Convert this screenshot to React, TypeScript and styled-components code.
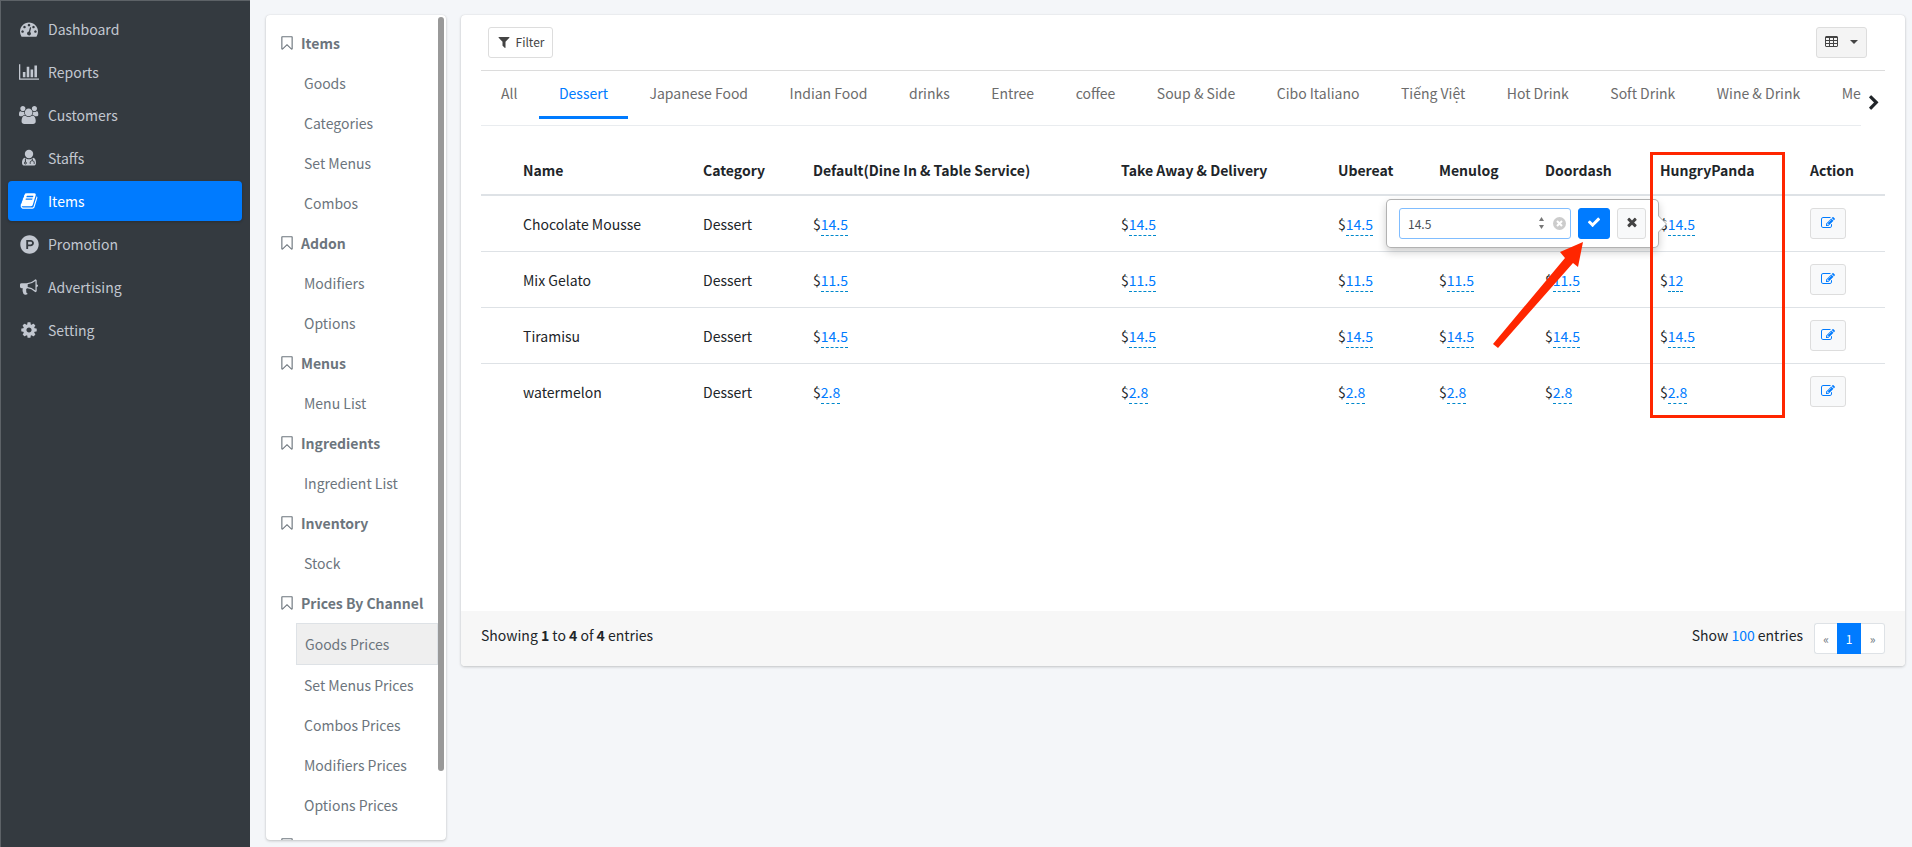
import React from 'react';
import styled, { createGlobalStyle, css } from 'styled-components';
import { FaProductHunt } from 'react-icons/fa';

const GlobalStyle = createGlobalStyle`
  *, *::before, *::after { box-sizing: border-box; }
  body {
    margin: 0;
    background: #f4f6f9;
    color: #212529;
    font-family: 'Source Sans Pro', 'Noto Sans CJK SC', 'Noto Sans', sans-serif;
    font-size: 14px;
    line-height: 24px;
  }
  a { color: #007bff; text-decoration: none; }
  button, input { font-family: inherit; }
  ul { list-style: none; margin: 0; padding: 0; }
`;

/* ---------- icons ---------- */

const paths = {
  dashboard: {
    w: 1792,
    d: 'M384 1152q0-53-37.5-90.5t-90.5-37.5-90.5 37.5-37.5 90.5 37.5 90.5 90.5 37.5 90.5-37.5 37.5-90.5zm192-448q0-53-37.5-90.5t-90.5-37.5-90.5 37.5-37.5 90.5 37.5 90.5 90.5 37.5 90.5-37.5 37.5-90.5zm428 481l101-382q6-26-7.5-48.5t-38.5-29.5-48 6.5-30 39.5l-101 382q-60 5-107 43.5t-63 98.5q-20 77 20 146t117 89 146-20 89-117q16-60-6-117t-72-91zm660-33q0-53-37.5-90.5t-90.5-37.5-90.5 37.5-37.5 90.5 37.5 90.5 90.5 37.5 90.5-37.5 37.5-90.5zm-640-640q0-53-37.5-90.5t-90.5-37.5-90.5 37.5-37.5 90.5 37.5 90.5 90.5 37.5 90.5-37.5 37.5-90.5zm448 192q0-53-37.5-90.5t-90.5-37.5-90.5 37.5-37.5 90.5 37.5 90.5 90.5 37.5 90.5-37.5 37.5-90.5zm320 448q0 261-141 483-19 29-54 29h-1402q-35 0-54-29-141-221-141-483 0-182 71-348t191-286 286-191 348-71 348 71 286 191 191 286 71 348z',
  },
  chart: {
    w: 2048,
    d: 'M640 896v512h-256v-512h256zm384-512v1024h-256v-1024h256zm1024 1152v128h-2048v-1536h128v1408h1920zm-640-896v768h-256v-768h256zm384-384v1152h-256v-1152h256z',
  },
  users: {
    w: 1920,
    d: 'M593 896q-162 5-265 128h-134q-82 0-138-40.5t-56-118.5q0-353 124-353 6 0 43.5 21t97.5 42.5 119 21.5q67 0 133-23-5 37-5 66 0 139 81 256zm1071 637q0 120-73 189.5t-194 69.5h-874q-121 0-194-69.5t-73-189.5q0-53 3.5-103.5t14-109 26.5-108.5 43-97.5 62-81 85.5-53.5 111.5-20q10 0 43 21.5t73 48 107 48 135 21.5 135-21.5 107-48 73-48 43-21.5q61 0 111.5 20t85.5 53.5 62 81 43 97.5 26.5 108.5 14 109 3.5 103.5zm-1024-1277q0 106-75 181t-181 75-181-75-75-181 75-181 181-75 181 75 75 181zm704 384q0 159-112.5 271.5t-271.5 112.5-271.5-112.5-112.5-271.5 112.5-271.5 271.5-112.5 271.5 112.5 112.5 271.5zm576 225q0 78-56 118.5t-138 40.5h-134q-103-123-265-128 81-117 81-256 0-29-5-66 66 23 133 23 59 0 119-21.5t97.5-42.5 43.5-21q124 0 124 353zm-128-609q0 106-75 181t-181 75-181-75-75-181 75-181 181-75 181 75 75 181z',
  },
  book: {
    w: 1792,
    d: 'M1703 478q40 57 18 129l-275 906q-19 64-76.5 107.5t-122.5 43.5h-923q-77 0-148.5-53.5t-99.5-131.5q-24-67-2-127 0-4 3-27t4-37q1-8-3-21.5t-3-19.5q2-11 8-21t16.5-23.5 16.5-23.5q23-38 45-91.5t30-91.5q3-10 .5-30t-.5-28q3-11 17-28t17-23q21-36 42-92t25-90q1-9-2.5-32t.5-28q4-13 22-30.5t22-22.5q19-26 42.5-84.5t27.5-96.5q1-8-3-25.5t-2-26.5q2-8 9-18t18-23 17-21q8-12 16.5-30.5t15-35 16-36 19.5-32 26.5-23.5 36-11.5 47.5 5.5l-1 3q38-9 51-9h761q74 0 114 56t18 130l-274 906q-36 119-71.5 153.5t-128.5 34.5h-869q-27 0-38 15-11 16-1 43 24 70 144 70h923q29 0 56-15.5t35-41.5l300-987q7-22 5-57 38 15 59 43zm-1064 2q-4 13 2 22.5t20 9.5h608q13 0 25.5-9.5t16.5-22.5l21-64q4-13-2-22.5t-20-9.5h-608q-13 0-25.5 9.5t-16.5 22.5zm-83 256q-4 13 2 22.5t20 9.5h608q13 0 25.5-9.5t16.5-22.5l21-64q4-13-2-22.5t-20-9.5h-608q-13 0-25.5 9.5t-16.5 22.5z',
  },
  bullhorn: {
    w: 1792,
    d: 'M1664 640q53 0 90.5 37.5t37.5 90.5-37.5 90.5-90.5 37.5v384q0 52-38 90t-90 38q-417-347-812-380-58 19-91 66t-31 100.5 40 92.5q-20 33-23 65.5t6 58 33.5 55 48 50 61.5 50.5q-29 58-111.5 83t-168.5 11.5-132-55.5q-7-23-29.5-87.5t-32-94.5-23-89-15-101 3.5-98.5 22-110.5h-122q-66 0-113-47t-47-113v-192q0-66 47-113t113-47h480q435 0 896-384 52 0 90 38t38 90v384zm-128 604v-954q-394 302-768 343v270q377 42 768 341z',
  },
  cog: {
    w: 1792,
    d: 'M1152 896q0-106-75-181t-181-75-181 75-75 181 75 181 181 75 181-75 75-181zm512-109v222q0 12-8 23t-20 13l-185 28q-19 54-39 91 35 50 107 138 10 12 10 25t-9 23q-27 37-99 108t-94 71q-12 0-26-9l-138-108q-44 23-91 38-16 136-29 186-7 28-36 28h-222q-14 0-24.5-8.5t-11.5-21.5l-28-184q-49-16-90-37l-141 107q-10 9-25 9-14 0-25-11-126-114-165-168-7-10-7-23 0-12 8-23 15-21 51-66.5t54-70.5q-27-50-41-99l-183-27q-13-2-21-12.5t-8-23.5v-222q0-12 8-23t19-13l186-28q14-46 39-92-40-57-107-138-10-12-10-24 0-10 9-23 26-36 98.5-107.5t94.5-71.5q13 0 26 10l138 107q44-23 91-38 16-136 29-186 7-28 36-28h222q14 0 24.5 8.5t11.5 21.5l28 184q49 16 90 37l142-107q9-9 24-9 13 0 25 10 129 119 165 170 7 8 7 22 0 12-8 23-15 21-51 66.5t-54 70.5q26 50 41 98l183 28q13 2 21 12.5t8 23.5z',
  },
  bookmark: {
    w: 1792,
    d: 'M1408 256h-1024v1242l423-406 89-85 89 85 423 406v-1242zm12-128q23 0 44 9 33 13 52.5 41t19.5 62v1289q0 34-19.5 62t-52.5 41q-19 8-44 8-48 0-83-32l-441-424-441 424q-36 33-83 33-23 0-44-9-33-13-52.5-41t-19.5-62v-1289q0-34 19.5-62t52.5-41q21-9 44-9h1048z',
  },
  filter: {
    w: 1792,
    d: 'M1595 295q17 41-14 70l-493 493v742q0 42-39 59-13 5-25 5-27 0-45-19l-256-256q-19-19-19-45v-486l-493-493q-31-29-14-70 17-39 59-39h1280q42 0 59 39z',
  },
  check: {
    w: 1792,
    d: 'M1671 566q0 40-28 68l-724 724-136 136q-28 28-68 28t-68-28l-136-136-362-362q-28-28-28-68t28-68l136-136q28-28 68-28t68 28l294 295 656-657q28-28 68-28t68 28l136 136q28 28 28 68z',
  },
  times: {
    w: 1792,
    d: 'M1490 1322q0 40-28 68l-136 136q-28 28-68 28t-68-28l-294-294-294 294q-28 28-68 28t-68-28l-136-136q-28-28-28-68t28-68l294-294-294-294q-28-28-28-68t28-68l136-136q28-28 68-28t68 28l294 294 294-294q28-28 68-28t68 28l136 136q28 28 28 68t-28 68l-294 294 294 294q28 28 28 68z',
  },
  edit: {
    w: 1792,
    d: 'M888 1184l116-116-152-152-116 116v56h96v96h56zm440-720q-16-16-33 1l-350 350q-17 17-1 33t33-1l350-350q17-17 1-33zm80 594v190q0 119-84.5 203.5t-203.5 84.5h-832q-119 0-203.5-84.5t-84.5-203.5v-832q0-119 84.5-203.5t203.5-84.5h832q63 0 117 25 15 7 18 23 3 17-9 29l-49 49q-14 14-32 8-23-6-45-6h-832q-66 0-113 47t-47 113v832q0 66 47 113t113 47h832q66 0 113-47t47-113v-126q0-13 9-22l64-64q15-15 35-7t20 29zm-96-738l288 288-672 672h-288v-288zm444 132l-92 92-288-288 92-92q28-28 68-28t68 28l152 152q28 28 28 68t-28 68z',
  },
  chevron: {
    w: 1792,
    d: 'M1363 877l-742 742q-19 19-45 19t-45-19l-166-166q-19-19-19-45t19-45l531-531-531-531q-19-19-19-45t19-45l166-166q19-19 45-19t45 19l742 742q19 19 19 45t-19 45z',
  },
};

type IconName = keyof typeof paths;

const Svg = styled.svg`
  display: block;
  flex: none;
  fill: currentColor;
`;

function Icon({ name, size }: { name: IconName; size: number }) {
  const { w, d } = paths[name];
  return (
    <Svg viewBox={`0 0 ${w} 1792`} width={(size * w) / 1792} height={size} aria-hidden="true">
      <path d={d} />
    </Svg>
  );
}

function DoctorIcon() {
  return (
    <Svg viewBox="0 0 16 18" width={16} height={18} aria-hidden="true">
      <circle cx="8" cy="5" r="4.2" />
      <path d="M3.6 8.8C1.6 9.6 1 11.600 1 14c0 1.700 1 2.600 2.600 2.600h8.800c1.600 0 2.600-.9 2.600-2.600 0-2.400-.6-4.400-2.600-5.200C11.300 9.700 9.800 10.300 8 10.300S4.700 9.700 3.600 8.800z" />
      <g fill="none" stroke="#343a40" strokeWidth="1">
        <path d="M4.400 9.600v3.600M9.200 14.800v-1.300c0-2.400 4-2.400 4 0v1.300M11.300 9.600v2" />
        <circle cx="4.400" cy="14" r="1" />
      </g>
    </Svg>
  );
}

function GridIcon() {
  return (
    <Svg viewBox="0 0 13 11" width={13} height={11} aria-hidden="true">
      <path
        fillRule="evenodd"
        d="M1 0h11l1 1v9l-1 1H1l-1-1V1zM1 2v2h3V2zM5 2v2h3V2zM9 2v2h3V2zM1 5v2h3V5zM5 5v2h3V5zM9 5v2h3V5zM1 8v2h3V8zM5 8v2h3V8zM9 8v2h3V8z"
      />
    </Svg>
  );
}

/* ---------- shell ---------- */

const Page = styled.div`
  display: flex;
  height: 100vh;
  min-height: 700px;
`;

const Sidebar = styled.nav`
  flex: none;
  width: 250px;
  padding: 8px 8px 0 7px;
  background: #343a40;
  border-top: 1px solid #5d6267;
  border-left: 1px solid #5d6267;
`;

const SideList = styled.ul`
  display: grid;
  gap: 3px;
`;

const SideLink = styled.a<{ $active?: boolean }>`
  display: flex;
  align-items: center;
  gap: 6px;
  height: 40px;
  padding: 0 8px;
  border-radius: 4px;
  color: #c2c7d0;
  ${p => p.$active && css`
    background: #007bff;
    color: #fff;
    box-shadow: 0 1px 3px rgba(0, 0, 0, 0.24);
  `}
`;

const SideIcon = styled.span`
  display: flex;
  justify-content: center;
  width: 26px;
`;

const Content = styled.main`
  display: flex;
  flex: 1;
  min-width: 0;
  align-items: flex-start;
  gap: 15px;
  padding: 15px 7px 7px 16px;
`;

const panel = css`
  background: #fff;
  border-radius: 4px;
  box-shadow: 0 0 1px rgba(0, 0, 0, 0.125), 0 1px 3px rgba(0, 0, 0, 0.2);
`;

/* ---------- section menu ---------- */

const Menu = styled.nav`
  ${panel}
  position: relative;
  flex: none;
  width: 180px;
  height: 100%;
  padding: 8px 8px 0 13px;
  overflow: hidden;
`;

const Thumb = styled.div`
  position: absolute;
  top: 2px;
  right: 2px;
  width: 6px;
  height: 754px;
  border-radius: 3px;
  background: #999;
`;

const MenuGroup = styled.div`
  display: flex;
  align-items: center;
  gap: 6px;
  height: 40px;
  color: #6c757d;
  font-weight: 700;
  white-space: nowrap;
`;

const MenuItem = styled.a<{ $active?: boolean }>`
  display: block;
  margin-left: 17px;
  padding: 8px;
  color: #6c757d;
  white-space: nowrap;
  ${p => p.$active && css`
    border: 1px solid #dee2e6;
    background: #efefef;
  `}
`;

/* ---------- card ---------- */

const Card = styled.section`
  ${panel}
  flex: 1;
  min-width: 0;
`;

const CardBody = styled.div`
  min-height: 596px;
  padding: 12px 20px 0;
`;

const Toolbar = styled.div`
  display: flex;
  justify-content: space-between;
  padding: 0 18px 12px 7px;
  border-bottom: 1px solid #dcdcdc;
`;

const Button = styled.button<{ $tone?: 'plain' | 'grey' | 'light' | 'primary'; $width?: number }>`
  display: inline-flex;
  align-items: center;
  justify-content: center;
  gap: 5px;
  flex: none;
  width: ${p => (p.$width ? `${p.$width}px` : 'auto')};
  height: 31px;
  padding: 0 8px 2px;
  border: 1px solid #ddd;
  border-radius: 3px;
  background: #fff;
  color: #444;
  font-size: 12px;
  line-height: 20px;
  ${p => p.$tone === 'grey' && css`background: #f4f4f4; gap: 12px;`}
  ${p => p.$tone === 'light' && css`background: #f8f9fa;`}
  ${p => p.$tone === 'primary' && css`background: #007bff; border-color: #007bff; color: #fff;`}
`;

const EditButton = styled(Button)`
  display: flex;
  color: #007bff;
`;

const Caret = styled.span`
  border: 4px solid transparent;
  border-top-color: #444;
  border-bottom: 0;
`;

const TabBar = styled.div`
  display: flex;
  align-items: center;
`;

const Tabs = styled.div`
  display: flex;
  justify-content: space-between;
  flex: 1;
  min-width: 0;
  height: 55px;
  overflow: hidden;
  border-bottom: 1px solid #e9ecef;
`;

const Tab = styled.a<{ $active?: boolean }>`
  flex: none;
  height: 48px;
  padding: 10px 20px 0;
  border-bottom: 3px solid ${p => (p.$active ? '#007bff' : 'transparent')};
  color: ${p => (p.$active ? '#007bff' : '#6c6c6c')};
  white-space: nowrap;

  &:last-child {
    padding-right: 0;
  }
`;

const NextButton = styled.button`
  display: flex;
  justify-content: center;
  width: 24px;
  padding: 8px 2px 0 4px;
  border: 0;
  background: none;
  color: #212529;
`;

const Table = styled.table`
  width: 100%;
  margin-top: 20px;
  table-layout: fixed;
  border-collapse: separate;
  border-spacing: 0;
  text-align: left;
`;

const Th = styled.th`
  position: relative;
  padding: 12px;
  border-bottom: 2px solid #dee2e6;
  font-weight: 700;
  white-space: nowrap;
`;

const Td = styled.td`
  padding: 12px;
  vertical-align: middle;
  white-space: nowrap;

  tr + tr > & {
    border-top: 1px solid #dee2e6;
  }
`;

const Price = styled.span`
  position: relative;
`;

const PriceLink = styled.a`
  padding-bottom: 1px;
  border-bottom: 1px dashed #0088cc;
`;

/* ---------- inline price editor ---------- */

const Popover = styled.form`
  position: absolute;
  top: -15px;
  right: calc(100% + 1px);
  z-index: 2;
  display: flex;
  gap: 7px;
  width: 273px;
  height: 49px;
  padding: 8px 12px;
  border: 1px solid rgba(0, 0, 0, 0.3);
  border-radius: 5px;
  background: #fff;
  box-shadow: 0 4px 8px rgba(0, 0, 0, 0.2);

  &::before,
  &::after {
    content: '';
    position: absolute;
    top: 16px;
    right: -9px;
    border: 8px solid transparent;
    border-left-color: #aaa;
    border-right: 0;
  }

  &::after {
    right: -8px;
    border-left-color: #fff;
  }
`;

const Field = styled.label`
  position: relative;
  flex: none;
  width: 172px;
`;

const NumberInput = styled.input`
  display: block;
  width: 100%;
  height: 31px;
  padding: 0 40px 0 8px;
  border: 1px solid #80bdff;
  border-radius: 3px;
  outline: 0;
  background: #fff;
  color: #495057;
  font-size: 12px;
  appearance: textfield;

  &::-webkit-inner-spin-button {
    appearance: none;
  }
`;

const FieldTools = styled.span`
  position: absolute;
  top: 0;
  right: 5px;
  display: flex;
  align-items: center;
  gap: 8px;
  height: 31px;
`;

const Highlight = styled.span`
  position: absolute;
  top: 6px;
  left: 2px;
  z-index: 3;
  width: 135px;
  height: 266px;
  border: 3px solid #ff2600;
  pointer-events: none;
`;

const Pointer = styled.svg`
  position: absolute;
  top: 42px;
  left: 104px;
  overflow: visible;
  pointer-events: none;
`;

/* ---------- footer ---------- */

const CardFooter = styled.footer`
  display: flex;
  justify-content: space-between;
  padding: 12px 20px;
  border-radius: 0 0 4px 4px;
  background: #f7f7f7;
`;

const FooterRight = styled.div`
  display: flex;
  gap: 11px;
`;

const Pager = styled.ul`
  display: flex;
  border-radius: 3px;
  background: #fff;
`;

const PageLink = styled.a<{ $active?: boolean }>`
  display: flex;
  align-items: center;
  justify-content: center;
  width: 24px;
  height: 31px;
  border: 1px solid ${p => (p.$active ? '#007bff' : '#dee2e6')};
  background: ${p => (p.$active ? '#007bff' : 'transparent')};
  color: ${p => (p.$active ? '#fff' : '#6c757d')};
  font-size: 12px;

  li:first-child > & { width: 23px; border-right: 0; border-radius: 3px 0 0 3px; }
  li:last-child > & { border-left: 0; border-radius: 0 3px 3px 0; }
`;

/* ---------- data ---------- */

const sideItems: { label: string; icon: React.ReactNode; active?: boolean }[] = [
  { label: 'Dashboard', icon: <Icon name="dashboard" size={18} /> },
  { label: 'Reports', icon: <Icon name="chart" size={18} /> },
  { label: 'Customers', icon: <Icon name="users" size={18} /> },
  { label: 'Staffs', icon: <DoctorIcon /> },
  { label: 'Items', icon: <Icon name="book" size={18} />, active: true },
  { label: 'Promotion', icon: <FaProductHunt size={19} /> },
  { label: 'Advertising', icon: <Icon name="bullhorn" size={18} /> },
  { label: 'Setting', icon: <Icon name="cog" size={18} /> },
];

const menu: { title: string; items: string[] }[] = [
  { title: 'Items', items: ['Goods', 'Categories', 'Set Menus', 'Combos'] },
  { title: 'Addon', items: ['Modifiers', 'Options'] },
  { title: 'Menus', items: ['Menu List'] },
  { title: 'Ingredients', items: ['Ingredient List'] },
  { title: 'Inventory', items: ['Stock'] },
  {
    title: 'Prices By Channel',
    items: ['Goods Prices', 'Set Menus Prices', 'Combos Prices', 'Modifiers Prices', 'Options Prices'],
  },
  { title: '', items: [] },
];

const tabs = [
  'All', 'Dessert', 'Japanese Food', 'Indian Food', 'drinks', 'Entree', 'coffee', 'Soup & Side',
  'Cibo Italiano', 'Tiếng Việt', 'Hot Drink', 'Soft Drink', 'Wine & Drink', 'Me',
];

const columns = [
  { title: '', width: 30 },
  { title: 'Name', width: 180 },
  { title: 'Category', width: 110 },
  { title: 'Default(Dine In & Table Service)', width: 308 },
  { title: 'Take Away & Delivery', width: 217 },
  { title: 'Ubereat', width: 101 },
  { title: 'Menulog', width: 106 },
  { title: 'Doordash', width: 115 },
  { title: 'HungryPanda', width: 150 },
  { title: 'Action', width: 87 },
];

const rows = [
  { name: 'Chocolate Mousse', prices: ['14.5', '14.5', '14.5', '14.5', '14.5', '14.5'], editing: 5 },
  { name: 'Mix Gelato', prices: ['11.5', '11.5', '11.5', '11.5', '11.5', '12'] },
  { name: 'Tiramisu', prices: ['14.5', '14.5', '14.5', '14.5', '14.5', '14.5'] },
  { name: 'watermelon', prices: ['2.8', '2.8', '2.8', '2.8', '2.8', '2.8'] },
];

function PriceEditor({ value }: { value: string }) {
  return (
    <Popover onSubmit={e => e.preventDefault()}>
      <Field>
        <NumberInput type="number" step="0.1" defaultValue={value} aria-label="Price" />
        <FieldTools>
          <Svg viewBox="0 0 7 12" width={7} height={12} color="#777" aria-hidden="true">
            <path d="M3.500 0L6 4h-5zM3.500 12l2.500-4h-5z" />
          </Svg>
          <Svg viewBox="0 0 13 13" width={13} height={13} color="#ccc" aria-hidden="true">
            <circle cx="6.500" cy="6.500" r="6.500" />
            <path d="M4 4l5 5M9 4l-5 5" stroke="#fff" strokeWidth="2" />
          </Svg>
        </FieldTools>
      </Field>
      <Button type="submit" $tone="primary" $width={32} aria-label="Save">
        <Icon name="check" size={14} />
      </Button>
      <Button type="button" $tone="light" $width={29} aria-label="Cancel">
        <Icon name="times" size={14} />
      </Button>
      <Pointer width={92} height={106} viewBox="0 0 92 106" aria-hidden="true">
        <path d="M92 0L87 25l-5-4L7 106l-5-4L74 16l-5-6z" fill="#ff2600" />
      </Pointer>
    </Popover>
  );
}

export default function App() {
  return (
    <>
      <GlobalStyle />
      <Page>
        <Sidebar aria-label="Main">
          <SideList>
            {sideItems.map(item => (
              <li key={item.label}>
                <SideLink href="#" $active={item.active}>
                  <SideIcon>{item.icon}</SideIcon>
                  {item.label}
                </SideLink>
              </li>
            ))}
          </SideList>
        </Sidebar>
        <Content>
          <Menu aria-label="Items">
            {menu.map(group => (
              <div key={group.title}>
                <MenuGroup>
                  <Icon name="bookmark" size={16} />
                  {group.title}
                </MenuGroup>
                {group.items.map(item => (
                  <MenuItem key={item} href="#" $active={item === 'Goods Prices'}>
                    {item}
                  </MenuItem>
                ))}
              </div>
            ))}
            <Thumb />
          </Menu>
          <Card>
            <CardBody>
              <Toolbar>
                <Button type="button" $width={65}>
                  <Icon name="filter" size={14} />
                  Filter
                </Button>
                <Button type="button" $tone="grey" $width={51} aria-label="Columns">
                  <GridIcon />
                  <Caret />
                </Button>
              </Toolbar>
              <TabBar>
                <Tabs>
                  {tabs.map(tab => (
                    <Tab key={tab} href="#" $active={tab === 'Dessert'}>
                      {tab}
                    </Tab>
                  ))}
                </Tabs>
                <NextButton type="button" aria-label="Next categories">
                  <Icon name="chevron" size={16} />
                </NextButton>
              </TabBar>
              <Table>
                <colgroup>
                  {columns.map(c => (
                    <col key={c.title} width={c.width} />
                  ))}
                </colgroup>
                <thead>
                  <tr>
                    {columns.map(c => (
                      <Th key={c.title} scope="col">
                        {c.title}
                        {c.title === 'HungryPanda' && <Highlight />}
                      </Th>
                    ))}
                  </tr>
                </thead>
                <tbody>
                  {rows.map(row => (
                    <tr key={row.name}>
                      <Td />
                      <Td>{row.name}</Td>
                      <Td>Dessert</Td>
                      {row.prices.map((price, i) => (
                        <Td key={i}>
                          <Price>
                            $<PriceLink href="#">{price}</PriceLink>
                            {row.editing === i && <PriceEditor value={price} />}
                          </Price>
                        </Td>
                      ))}
                      <Td>
                        <EditButton type="button" $tone="light" $width={36} aria-label={`Edit ${row.name}`}>
                          <Icon name="edit" size={14} />
                        </EditButton>
                      </Td>
                    </tr>
                  ))}
                </tbody>
              </Table>
            </CardBody>
            <CardFooter>
              <span>
                Showing <b>1</b> to <b>4</b> of <b>4</b> entries
              </span>
              <FooterRight>
                <span>
                  Show <a href="#">100</a> entries
                </span>
                <Pager>
                  <li><PageLink href="#" aria-label="Previous">«</PageLink></li>
                  <li><PageLink href="#" $active>1</PageLink></li>
                  <li><PageLink href="#" aria-label="Next">»</PageLink></li>
                </Pager>
              </FooterRight>
            </CardFooter>
          </Card>
        </Content>
      </Page>
    </>
  );
}
